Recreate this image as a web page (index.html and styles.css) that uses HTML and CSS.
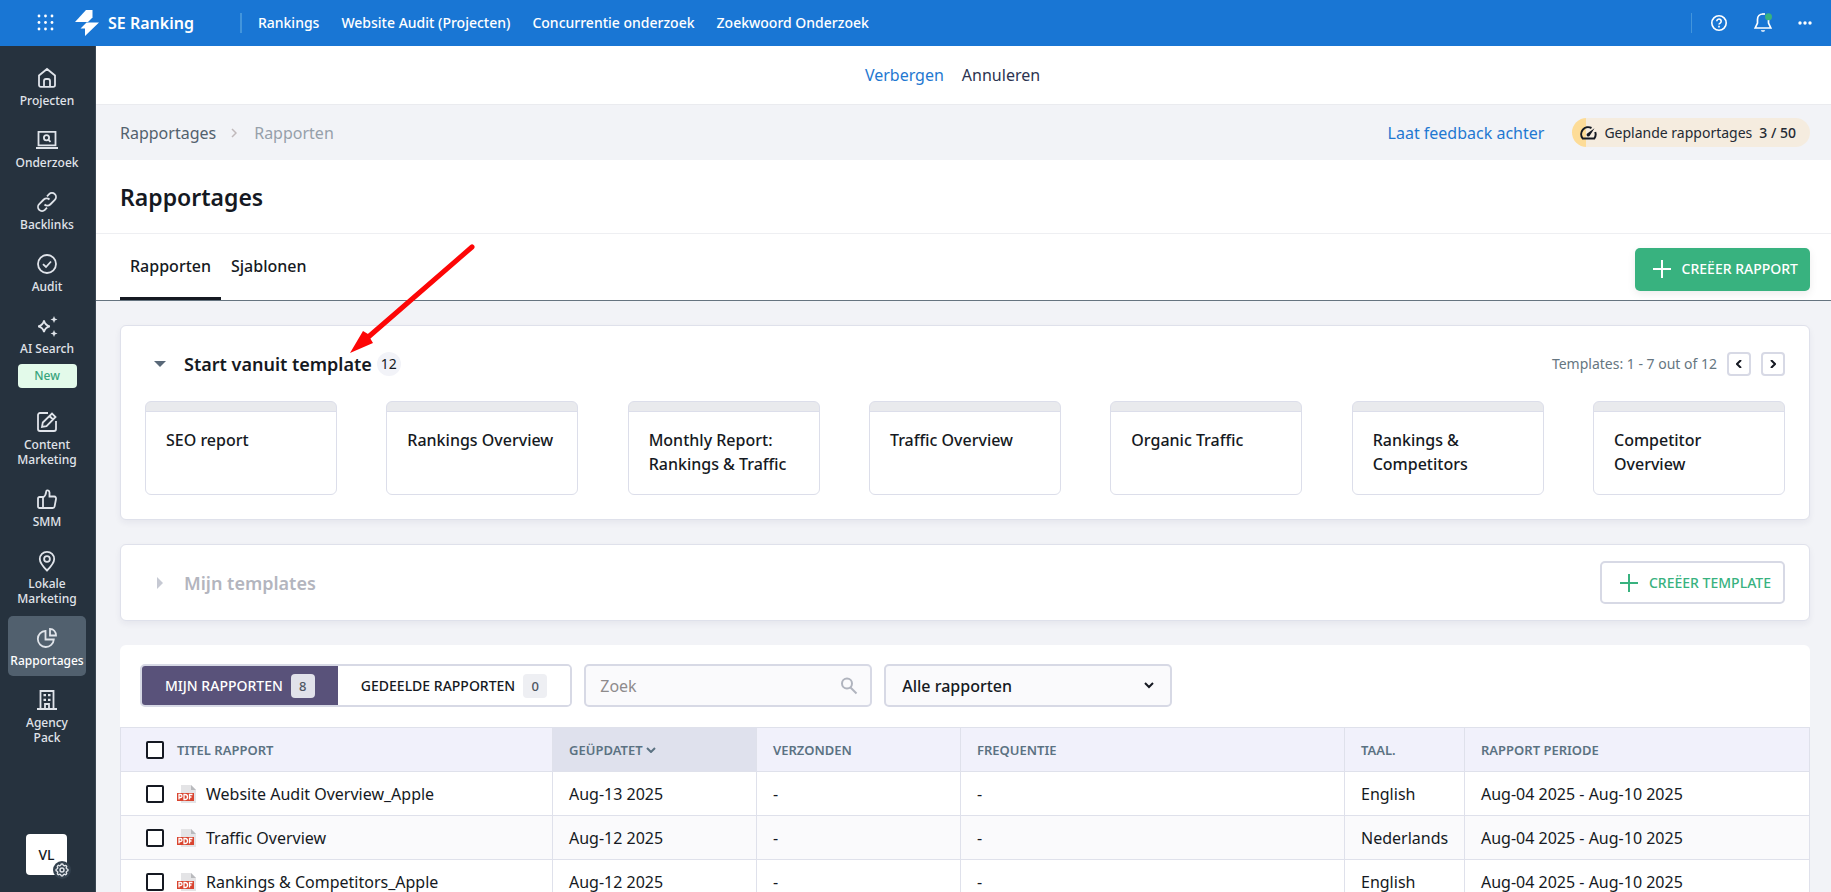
FILE: index.html
```html
<!DOCTYPE html>
<html lang="nl">
<head>
    <meta charset="UTF-8">
    <meta name="viewport" content="width=device-width, initial-scale=1">
    <title>Rapportages - SE Ranking</title>
    <link rel="stylesheet" href="styles.css">
</head>
<body>
    <svg class="sprite" aria-hidden="true">
        <symbol id="pdf" viewBox="0 0 20 18">
            <path d="M4 0h10l5 5v13H4z" fill="#e4e4e6"/>
            <path d="M14 0l5 5h-5z" fill="#b9babd"/>
            <path d="M0 8h17v8H0z" fill="#d9442f"/>
            <path d="M2 14.500v-5h1.500a1.200 1.200 0 0 1 0 3H2M7 9.500v5h1a2 2 0 0 0 0-5zM12.500 14.500v-5h3M12.500 12h2" fill="none" stroke="#fff" stroke-width="1.300"/>
        </symbol>
        <symbol id="plus" viewBox="0 0 18 18">
            <path d="M9 0v18M0 9h18" fill="none" stroke="currentColor" stroke-width="2"/>
        </symbol>
    </svg>

    <header class="topbar">
        <button class="icon-btn apps" aria-label="Apps">
            <svg width="18" height="18" viewBox="0 0 18 18" fill="#fff">
                <circle cx="2" cy="2" r="1.400"/><circle cx="8.500" cy="2" r="1.400"/><circle cx="15" cy="2" r="1.400"/>
                <circle cx="2" cy="8.500" r="1.400"/><circle cx="8.500" cy="8.500" r="1.400"/><circle cx="15" cy="8.500" r="1.400"/>
                <circle cx="2" cy="15" r="1.400"/><circle cx="8.500" cy="15" r="1.400"/><circle cx="15" cy="15" r="1.400"/>
            </svg>
        </button>
        <a class="logo" href="#">
            <svg width="24" height="26" viewBox="0 0 24 26" fill="#fff">
                <path d="M11 0h6.500v7.500L13 12H0z"/>
                <path d="M11.500 12.500H24L10 26v-7.500H5.500z"/>
            </svg>
            SE Ranking
        </a>
        <nav class="topnav">
            <a href="#">Rankings</a>
            <a href="#">Website Audit (Projecten)</a>
            <a href="#">Concurrentie onderzoek</a>
            <a href="#">Zoekwoord Onderzoek</a>
        </nav>
        <div class="top-actions">
            <button class="icon-btn" aria-label="Help">
                <svg width="18" height="18" viewBox="0 0 18 18" fill="none" stroke="#fff" stroke-width="1.600">
                    <circle cx="9" cy="9" r="7.200"/>
                    <path d="M6.800 7.300a2.200 2.200 0 1 1 3.400 1.800c-.8.5-1.200.8-1.200 1.500M9 11.800v1.600"/>
                </svg>
            </button>
            <button class="icon-btn" aria-label="Meldingen">
                <svg width="20" height="22" viewBox="0 0 20 22" fill="none" stroke="#fff" stroke-width="1.700">
                    <path d="M10 2C6.500 2 4.500 4.500 4.500 7.500V11L2.200 16h15.600l-2.300-5V8"/>
                    <path d="M7.800 18.200a2.300 2.300 0 0 0 4.400 0z" fill="#fff" stroke="none"/>
                    <path d="M9.500 2H12"/>
                    <circle cx="15.500" cy="4.800" r="3.500" fill="#38b27f" stroke="none"/>
                </svg>
            </button>
            <button class="icon-btn" aria-label="Meer">
                <svg width="14" height="4" viewBox="0 0 14 4" fill="#fff">
                    <circle cx="2" cy="2" r="1.700"/><circle cx="7" cy="2" r="1.700"/><circle cx="12" cy="2" r="1.700"/>
                </svg>
            </button>
        </div>
    </header>

    <div class="layout">
        <aside class="sidebar">
            <a class="side-item" href="#">
                <svg viewBox="0 0 20 20"><path d="M2 7.500L10 1l8 6.500V17a1.800 1.800 0 0 1-1.800 1.800H3.800A1.800 1.800 0 0 1 2 17zM7 18.500V13a2 2 0 0 1 2-2h2a2 2 0 0 1 2 2v5.500"/></svg>
                Projecten
            </a>
            <a class="side-item" href="#">
                <svg viewBox="0 0 20 20"><path d="M1.500 1.800h17v13.500h-17zM-1 18h22"/><circle cx="9.500" cy="7.800" r="2.600"/><path d="M11.500 9.800l2 2"/></svg>
                Onderzoek
            </a>
            <a class="side-item" href="#">
                <svg viewBox="0 0 20 20"><path d="M7.500 12.500a4 4 0 0 0 5.700 0l4.600-4.600a4 4 0 0 0-5.700-5.700L10 4.300M12.500 7.500a4 4 0 0 0-5.700 0l-4.600 4.600a4 4 0 0 0 5.700 5.700l2.100-2.100"/></svg>
                Backlinks
            </a>
            <a class="side-item" href="#">
                <svg viewBox="0 0 20 20"><circle cx="10" cy="10" r="9"/><path d="M6 10.200l3 2.800 5-5.500"/></svg>
                Audit
            </a>
            <a class="side-item" href="#">
                <svg viewBox="0 0 20 20"><path d="M7 4.500c.6 3.200 2 5 5.800 5.800-3.800.8-5.200 2.500-5.800 5.800-.6-3.300-2-5-5.800-5.800C5 9.500 6.400 7.700 7 4.500z"/><path class="fill" d="M17 0l1 2.500 2.500 1-2.500 1-1 2.500-1-2.500-2.500-1 2.500-1zM17 14l1 2.500 2.500 1-2.500 1-1 2.500-1-2.500-2.500-1 2.500-1z"/></svg>
                AI Search
                <span class="new">New</span>
            </a>
            <a class="side-item" href="#">
                <svg viewBox="0 0 20 20"><path d="M11 1H3a2 2 0 0 0-2 2v14a2 2 0 0 0 2 2h14a2 2 0 0 0 2-2V9M5 15l.8-4.500L15 1.500l3.500 3.500-9 9.200zM12.500 4l3.500 3.500"/></svg>
                Content<br>Marketing
            </a>
            <a class="side-item" href="#">
                <svg viewBox="0 0 20 20"><path d="M1 9.500A1.500 1.500 0 0 1 2.500 8H6v11H2.500A1.500 1.500 0 0 1 1 17.500zM6 8.500c2.500-1.500 3-3.500 3.200-6 .1-1.800 3.300-1.700 3.300 1V7.500h4.700A2 2 0 0 1 19 10l-1.400 7.300A2 2 0 0 1 15.500 19H6"/></svg>
                SMM
            </a>
            <a class="side-item" href="#">
                <svg viewBox="0 0 20 20"><path d="M10 19.500C5.500 15 2.800 11.500 2.800 8a7.200 7.200 0 0 1 14.400 0c0 3.500-2.700 7-7.200 11.500z"/><circle cx="10" cy="8" r="2.900"/></svg>
                Lokale<br>Marketing
            </a>
            <a class="side-item active" href="#">
                <svg viewBox="0 0 20 20"><path d="M8.500 3a8 8 0 1 0 8.300 8.500H8.500z"/><path d="M13 1c3.500 0 6 2.500 6 6.500h-6z"/></svg>
                Rapportages
            </a>
            <a class="side-item" href="#">
                <svg viewBox="0 0 20 20"><path d="M3.500 19V1h13v18M0 19h20M8 19v-5h4v5"/><path d="M6.500 5.200h2.500M11 5.200h2.500M6.500 9.800h2.500M11 9.800h2.500" stroke-width="2.200"/></svg>
                Agency<br>Pack
            </a>
            <button class="profile">
                VL
                <span class="gear">
                    <svg width="16" height="16" viewBox="0 0 24 24" fill="none" stroke="#dfe3e8" stroke-width="2.200"><path d="M10.300 4.300c.4-1.700 3-1.700 3.400 0a1.700 1.700 0 0 0 2.600 1.100c1.500-1 3.300.8 2.400 2.300a1.700 1.700 0 0 0 1 2.600c1.800.4 1.800 3 0 3.400a1.700 1.700 0 0 0-1 2.600c.9 1.500-.9 3.300-2.400 2.400a1.700 1.700 0 0 0-2.600 1c-.4 1.800-3 1.800-3.400 0a1.700 1.700 0 0 0-2.600-1c-1.500.9-3.300-.9-2.400-2.400a1.700 1.700 0 0 0-1-2.600c-1.800-.4-1.800-3 0-3.400a1.700 1.700 0 0 0 1-2.600c-.9-1.500.9-3.300 2.400-2.400 1 .6 2.300.1 2.600-1z"/><circle cx="12" cy="12" r="3"/></svg>
                </span>
            </button>
        </aside>

        <main class="main">
            <div class="notice">
                <a href="#">Verbergen</a>
                <a class="dark" href="#">Annuleren</a>
            </div>

            <div class="crumbs">
                <nav class="crumb-list">
                    <a href="#">Rapportages</a>
                    <svg width="6" height="10" viewBox="0 0 6 10" fill="none" stroke="#c0b9bb" stroke-width="1.500"><path d="M1 1l4 4-4 4"/></svg>
                    <span>Rapporten</span>
                </nav>
                <a class="feedback" href="#">Laat feedback achter</a>
                <div class="limit">
                    <svg width="17" height="14" viewBox="0 0 17 14" fill="none" stroke="#151922" stroke-width="2"><path d="M11.500 2A7 7 0 0 0 2.700 12.500h11.600A7 7 0 0 0 15.200 6"/><path d="M6.900 7.800L14.500 2.300 9.700 9.800a1.700 1.700 0 0 1-2.800-2z" fill="#151922" stroke="none"/></svg>
                    Geplande rapportages <b>3 / 50</b>
                </div>
            </div>

            <div class="title-row">
                <h1>Rapportages</h1>
            </div>

            <div class="tabs-row">
                <nav class="tabs">
                    <a class="tab active" href="#">Rapporten</a>
                    <a class="tab" href="#">Sjablonen</a>
                </nav>
                <button class="btn btn-green"><svg class="plus"><use href="#plus"/></svg>CREËER RAPPORT</button>
            </div>

            <div class="content">
                <section class="card">
                    <div class="card-head">
                        <button class="icon-btn toggle" aria-label="Inklappen"><svg width="12" height="6" viewBox="0 0 12 6"><path d="M0 0h12L6 6z" fill="#596878"/></svg></button>
                        <h2>Start vanuit template</h2>
                        <span class="count">12</span>
                        <span class="pages">Templates: 1 - 7 out of 12</span>
                        <button class="pager" aria-label="Vorige"><svg width="6" height="8" viewBox="0 0 6 8"><path d="M5 0L1 4l4 4"/></svg></button>
                        <button class="pager" aria-label="Volgende"><svg width="6" height="8" viewBox="0 0 6 8"><path d="M1 0l4 4-4 4"/></svg></button>
                    </div>
                    <div class="templates">
                        <a class="template" href="#">SEO report</a>
                        <a class="template" href="#">Rankings Overview</a>
                        <a class="template" href="#">Monthly Report: Rankings &amp; Traffic</a>
                        <a class="template" href="#">Traffic Overview</a>
                        <a class="template" href="#">Organic Traffic</a>
                        <a class="template" href="#">Rankings &amp; Competitors</a>
                        <a class="template" href="#">Competitor Overview</a>
                    </div>
                </section>

                <section class="card card-closed">
                    <button class="icon-btn toggle" aria-label="Uitklappen"><svg width="6" height="12" viewBox="0 0 6 12"><path d="M0 0l6 6-6 6z" fill="#c6c9d3"/></svg></button>
                    <h2>Mijn templates</h2>
                    <button class="btn btn-outline"><svg class="plus"><use href="#plus"/></svg>CREËER TEMPLATE</button>
                </section>

                <section class="reports">
                    <div class="filters">
                        <div class="switch">
                            <button class="on">MIJN RAPPORTEN <span>8</span></button>
                            <button>GEDEELDE RAPPORTEN <span>0</span></button>
                        </div>
                        <div class="field search">
                            <input type="text" placeholder="Zoek" aria-label="Zoek">
                            <svg width="18" height="18" viewBox="0 0 18 18" fill="none" stroke="#b0b4be" stroke-width="2"><circle cx="7" cy="6.500" r="5"/><path d="M10.500 10.500L16.500 16.500"/></svg>
                        </div>
                        <div class="field">
                            <select aria-label="Rapporten">
                                <option>Alle rapporten</option>
                            </select>
                            <svg class="chevron" width="10" height="7" viewBox="0 0 10 7" fill="none" stroke="#151922" stroke-width="2"><path d="M1 1l4 4 4-4"/></svg>
                        </div>
                    </div>
                    <table>
                        <colgroup>
                            <col class="c-title"><col class="c-date"><col class="c-date"><col class="c-freq"><col class="c-lang"><col>
                        </colgroup>
                        <thead>
                            <tr>
                                <th><label class="name"><input type="checkbox">TITEL RAPPORT</label></th>
                                <th class="sorted">GEÜPDATET <svg width="10" height="6" viewBox="0 0 10 6" fill="none" stroke="#5b7282" stroke-width="2"><path d="M1 1l4 4 4-4"/></svg></th>
                                <th>VERZONDEN</th>
                                <th>FREQUENTIE</th>
                                <th>TAAL.</th>
                                <th>RAPPORT PERIODE</th>
                            </tr>
                        </thead>
                        <tbody>
                            <tr>
                                <td><label class="name"><input type="checkbox"><svg class="pdf"><use href="#pdf"/></svg>Website Audit Overview_Apple</label></td>
                                <td>Aug-13 2025</td>
                                <td>-</td>
                                <td>-</td>
                                <td>English</td>
                                <td>Aug-04 2025 - Aug-10 2025</td>
                            </tr>
                            <tr>
                                <td><label class="name"><input type="checkbox"><svg class="pdf"><use href="#pdf"/></svg>Traffic Overview</label></td>
                                <td>Aug-12 2025</td>
                                <td>-</td>
                                <td>-</td>
                                <td>Nederlands</td>
                                <td>Aug-04 2025 - Aug-10 2025</td>
                            </tr>
                            <tr>
                                <td><label class="name"><input type="checkbox"><svg class="pdf"><use href="#pdf"/></svg>Rankings &amp; Competitors_Apple</label></td>
                                <td>Aug-12 2025</td>
                                <td>-</td>
                                <td>-</td>
                                <td>English</td>
                                <td>Aug-04 2025 - Aug-10 2025</td>
                            </tr>
                        </tbody>
                    </table>
                </section>
            </div>
        </main>
    </div>

    <svg class="arrow" width="128" height="112" viewBox="0 0 128 112" aria-hidden="true">
        <path d="M124 5L18 97" stroke="#fd0606" stroke-width="5" stroke-linecap="round"/>
        <path d="M2 111L15 89l5 3 2 4 3 5z" fill="#fd0606"/>
    </svg>
</body>
</html>
```
FILE: styles.css
```css
* { box-sizing: border-box; }
body {
    margin: 0;
    height: 100vh;
    overflow: hidden;
    position: relative;
    display: flex;
    flex-direction: column;
    font: 16px/24px "Noto Sans", sans-serif;
    color: #151922;
    background: #f2f3f7;
}
a { text-decoration: none; color: inherit; }
button, input, select { font: inherit; color: inherit; }
button { cursor: pointer; }
svg { display: block; flex: none; }
h1, h2 { margin: 0; font-weight: 600; }
.sprite { position: absolute; width: 0; height: 0; }
.icon-btn {
    display: flex;
    padding: 0;
    border: 0;
    background: none;
}

/* top bar */
.topbar {
    flex: none;
    height: 46px;
    display: flex;
    align-items: center;
    padding: 0 19px 0 37px;
    background: #1976d4;
    color: #fff;
}
.logo {
    display: flex;
    align-items: center;
    gap: 9px;
    margin-left: 20px;
    font-size: 16px;
    font-weight: 600;
}
.topnav {
    display: flex;
    align-items: center;
    gap: 22px;
    height: 20px;
    margin-left: 46px;
    padding-left: 16px;
    border-left: 2px solid #4295dc;
    font-size: 14px;
    font-weight: 500;
}
.top-actions {
    display: flex;
    align-items: center;
    gap: 25px;
    height: 20px;
    margin-left: auto;
    padding-left: 18px;
    border-left: 1px solid #4295dc;
}

.layout { flex: 1; min-height: 0; display: flex; }

/* sidebar */
.sidebar {
    flex: none;
    width: 96px;
    display: flex;
    flex-direction: column;
    gap: 2px;
    padding: 10px 9px 17px 8px;
    background: #26323e;
    border-right: 1px solid #3a4652;
}
.side-item {
    display: flex;
    flex-direction: column;
    align-items: center;
    padding: 12px 0 8px;
    border-radius: 5px;
    color: #e0e4ea;
    font-size: 12px;
    line-height: 15px;
    font-weight: 500;
    text-align: center;
}
.side-item svg {
    width: 20px;
    height: 20px;
    margin-bottom: 5px;
    overflow: visible;
    fill: none;
    stroke: #e0e4ea;
    stroke-width: 1.8;
}
.side-item .fill { fill: #e0e4ea; stroke: none; }
.side-item.active { background: #51606e; color: #fff; }
.new {
    width: 59px;
    margin: 8px 0 2px;
    border-radius: 4px;
    background: #e3faea;
    color: #38a47c;
    line-height: 24px;
}
.profile {
    position: relative;
    width: 41px;
    height: 41px;
    margin: auto auto 0 18px;
    padding: 0;
    border: 0;
    border-radius: 4px;
    background: #fff;
    font-size: 14px;
    font-weight: 500;
}
.gear {
    position: absolute;
    right: -4px;
    bottom: -4px;
    padding: 1px;
    border-radius: 50%;
    background: #33414e;
}

.main { flex: 1; min-width: 0; background: #f2f3f7; }
.notice {
    display: flex;
    justify-content: center;
    align-items: center;
    gap: 18px;
    height: 58px;
    padding-right: 22px;
    background: #fff;
    color: #1f78d1;
}
.notice .dark { color: #2c3350; }

.crumbs {
    display: flex;
    align-items: center;
    height: 56px;
    padding: 0 21px 0 24px;
    border-top: 1px solid #eaebef;
    color: #53616d;
}
.crumb-list { display: flex; align-items: center; gap: 15px; }
.crumb-list span { color: #96a0aa; margin-left: 2px; }
.feedback { margin-left: auto; color: #1f78d1; }
.limit {
    display: flex;
    align-items: center;
    gap: 7px;
    height: 29px;
    margin-left: 28px;
    padding: 0 14px 0 8px;
    border-radius: 15px;
    background: linear-gradient(to right, #fddc98 14px, #f5ecdf 14px);
    color: #242a33;
    font-size: 14px;
}
.limit b { font-weight: 500; }

.title-row {
    display: flex;
    align-items: center;
    height: 73px;
    padding: 0 24px;
    background: #fff;
}
h1 { font-size: 23px; line-height: 32px; }

.tabs-row {
    display: flex;
    align-items: center;
    justify-content: space-between;
    height: 68px;
    padding: 4px 21px 0 24px;
    background: #fff;
    border-top: 1px solid #eeeff2;
    border-bottom: 1px solid #667480;
}
.tabs { display: flex; align-self: stretch; font-weight: 500; }
.tab { padding: 16px 10px 0; border-bottom: 3px solid transparent; }
.tab.active { border-color: #151922; }
.btn {
    display: flex;
    align-items: center;
    gap: 11px;
    height: 43px;
    padding: 0 12px 0 18px;
    border-radius: 5px;
    font-size: 14px;
    font-weight: 500;
}
.plus { width: 18px; height: 18px; }
.btn-green {
    border: 0;
    background: #38b27f;
    color: #fff;
    box-shadow: 0 3px 8px rgba(0, 0, 0, 0.08);
}
.btn-outline {
    margin-left: auto;
    border: 2px solid #d7d9e5;
    background: #fff;
    color: #38b27f;
}

.content { padding: 24px 21px 0 24px; }
.card {
    margin-bottom: 24px;
    padding: 24px;
    background: #fff;
    border: 1px solid #dfe1eb;
    border-radius: 6px;
    box-shadow: 0 3px 6px rgba(30, 40, 80, 0.06);
}
.card-head { display: flex; align-items: center; height: 27px; margin-bottom: 24px; }
h2 { font-size: 18px; }
.toggle { justify-content: center; width: 12px; margin: 0 18px 0 9px; }
.count {
    width: 24px;
    margin-left: 5px;
    border-radius: 50%;
    background: #f2f3f8;
    font-size: 14px;
    text-align: center;
}
.pages { margin-left: auto; font-size: 14px; color: #667681; }
.pager {
    display: grid;
    place-items: center;
    width: 24px;
    height: 24px;
    margin-left: 10px;
    padding: 0;
    border: 2px solid #d7d9e5;
    border-radius: 4px;
    background: #fff;
}
.pager svg { fill: none; stroke: #151922; stroke-width: 2; }
.templates { display: flex; justify-content: space-between; }
.template {
    width: 192px;
    height: 94px;
    padding: 26px 20px 16px;
    border: 1px solid #dcdeea;
    border-radius: 6px;
    background: linear-gradient(#e9eaed 9px, #dcdeea 9px, #dcdeea 10px, #fff 10px);
    font-weight: 500;
}
.card-closed { display: flex; align-items: center; padding: 16px 24px; }
.card-closed h2 { color: #b3b5be; }

/* reports table */
.reports { background: #fff; border-radius: 6px 6px 0 0; }
.filters { display: flex; gap: 12px; padding: 19px 20px 20px; }
.switch {
    display: flex;
    height: 43px;
    border: 2px solid #d7d9e5;
    border-radius: 5px;
    overflow: hidden;
}
.switch button {
    display: flex;
    align-items: center;
    gap: 8px;
    padding: 0 23px;
    border: 0;
    background: #fff;
    font-size: 14px;
    font-weight: 500;
}
.switch .on { background: #59527a; color: #fff; }
.switch span {
    width: 24px;
    border-radius: 4px;
    background: #eeeff3;
    color: #4d5561;
    font-size: 13px;
}
.switch .on span { background: #e1e2ea; }
.field { position: relative; width: 288px; }
.field input, .field select {
    appearance: none;
    width: 100%;
    height: 43px;
    padding: 0 16px;
    border: 2px solid #d7d9e5;
    border-radius: 5px;
    background: #fafafc;
}
.field input { padding: 0 14px; }
.field input::placeholder { color: #8e8b8c; opacity: 1; }
.field select { font-weight: 500; }
.field svg { position: absolute; right: 14px; top: 13px; pointer-events: none; }
.field .chevron { right: 18px; top: 18px; }

table { width: 100%; table-layout: fixed; border-collapse: collapse; }
.c-title { width: 432px; }
.c-date { width: 204px; }
.c-freq { width: 384px; }
.c-lang { width: 120px; }
th, td {
    height: 44px;
    padding: 0 16px;
    border: 1px solid #dfe1eb;
    text-align: left;
    white-space: nowrap;
}
th { background: #f1f1fb; color: #5b7282; font-size: 13px; font-weight: 600; }
th.sorted { background: #dfe1ed; }
th.sorted svg { display: inline-block; vertical-align: 2px; }
th:first-child, td:first-child { padding-left: 25px; }
tbody tr:nth-child(even) { background: #fafafc; }
.name { display: flex; align-items: center; }
.name input {
    appearance: none;
    width: 18px;
    height: 18px;
    margin: 0 13px 0 0;
    border: 2px solid #151922;
    border-radius: 2px;
    background: #fff;
}
.pdf { width: 20px; height: 18px; margin-right: 9px; }

/* pointer drawn over the page */
.arrow { position: absolute; left: 348px; top: 242px; }
```
